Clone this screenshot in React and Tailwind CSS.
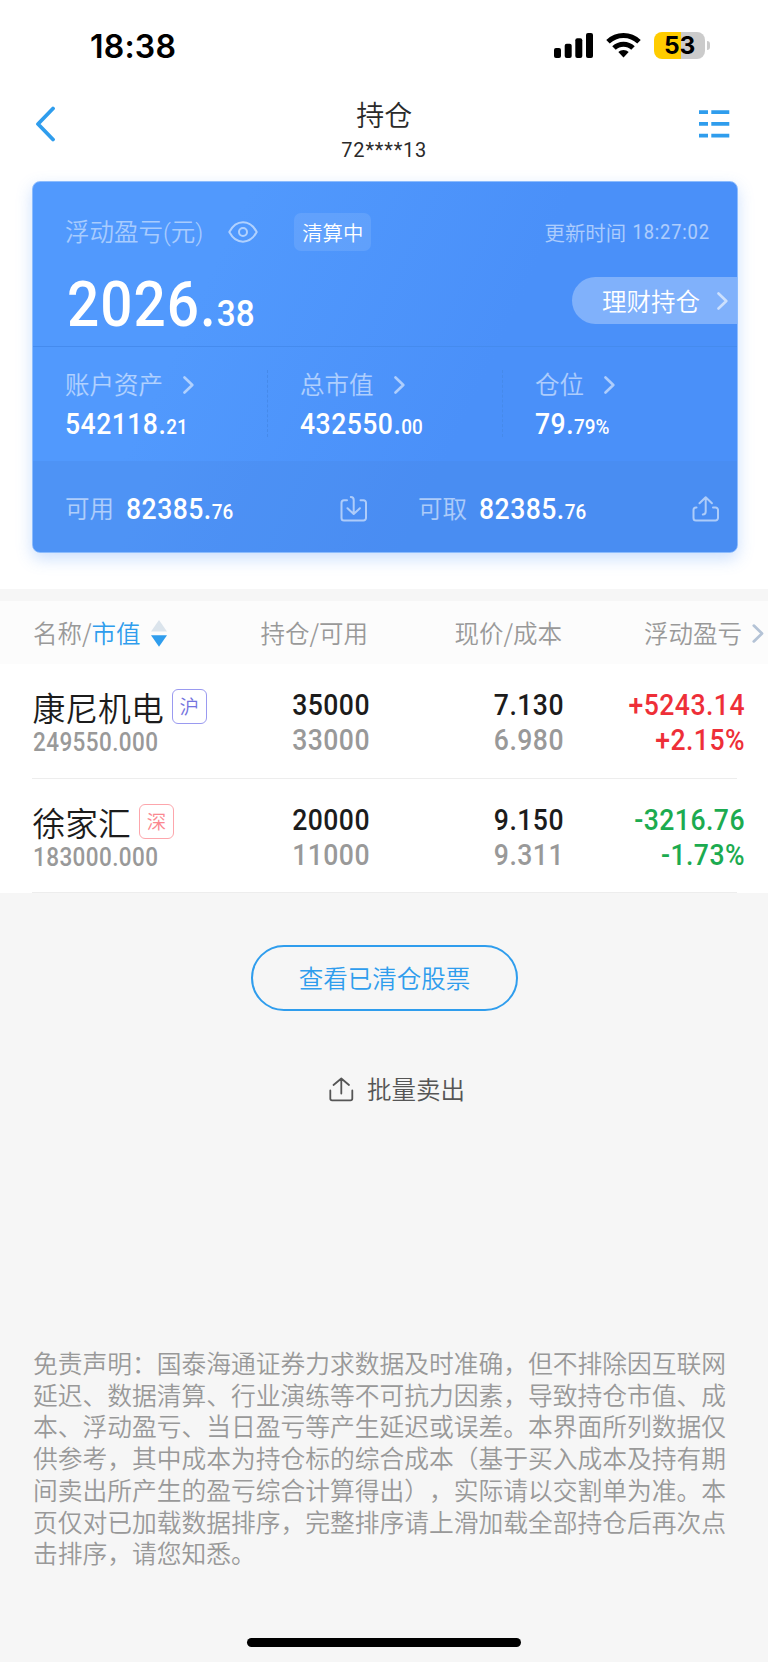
import React from 'react';

const summary = [
    { label: '账户资产', int: '542118.', dec: '21' },
    { label: '总市值', int: '432550.', dec: '00' },
    { label: '仓位', int: '79.', dec: '79%' },
];

const holdings = [
    { name: '康尼机电', market: '沪', value: '249550.000', amount: '35000', available: '33000', price: '7.130', cost: '6.980', profit: '+5243.14', rate: '+2.15%' },
    { name: '徐家汇', market: '深', value: '183000.000', amount: '20000', available: '11000', price: '9.150', cost: '9.311', profit: '-3216.76', rate: '-1.73%' },
];

const disclaimer = [
    '免责声明：国泰海通证券力求数据及时准确，但不排除因互联网',
    '延迟、数据清算、行业演练等不可抗力因素，导致持仓市值、成',
    '本、浮动盈亏、当日盈亏等产生延迟或误差。本界面所列数据仅',
    '供参考，其中成本为持仓标的综合成本（基于买入成本及持有期',
    '间卖出所产生的盈亏综合计算得出），实际请以交割单为准。本',
    '页仅对已加载数据排序，完整排序请上滑加载全部持仓后再次点',
    '击排序，请您知悉。',
];

const Chevron = ({ className }) => (
    <svg className={className} viewBox="0 0 11 18" fill="none" stroke="currentColor" strokeWidth="2.6" strokeLinecap="round" strokeLinejoin="round">
        <path d="M1.5 1.5 9.3 9 1.5 16.5" />
    </svg>
);

// narrow digits, close to DIN
const Num = ({ className = 'origin-left', children }) => (
    <span className={`inline-block font-['Roboto'] font-medium scale-x-90 tracking-[0.018em] ${className}`}>{children}</span>
);

const StatusBar = () => (
    <div className="h-[90px] flex items-start justify-between pl-[90px] pr-[58px] pt-[32px]">
        <div className="font-['Inter'] font-semibold text-[32px] leading-[28px] mt-[1px] tracking-[0.2px] text-black">18:38</div>
        <div className="flex items-start">
            <svg className="w-[39px] h-[27px]" viewBox="0 0 39 27" fill="#000">
                <rect x="0" y="16" width="7" height="10" rx="2" />
                <rect x="10.7" y="11.7" width="7" height="14.3" rx="2" />
                <rect x="21.3" y="6.2" width="7" height="19.8" rx="2" />
                <rect x="32" y="1" width="7" height="25" rx="2" />
            </svg>
            <svg className="w-[35px] h-[26px] ml-[13.5px]" viewBox="0 0 35 26" fill="none" stroke="#000" strokeWidth="5">
                <path d="M2 9.7a22.3 22.3 0 0 1 31 0" />
                <path d="M8 16a13.6 13.6 0 0 1 19 0" />
                <path d="M17.5 25.6 12.3 20a7.6 7.6 0 0 1 10.4 0z" fill="#000" stroke="none" />
            </svg>
            <div className="ml-[13px] w-[51px] h-[27px] rounded-[8px] bg-[linear-gradient(90deg,#ffcc00_53%,#cbcbcb_53%)] flex items-center justify-center font-['Inter'] font-bold text-[24.5px] leading-none tracking-[-0.3px] text-black">53</div>
            <div className="ml-[1.5px] mt-[9px] w-[3.5px] h-[9px] rounded-r-full bg-[#cbcbcb]" />
        </div>
    </div>
);

const Header = () => (
    <div className="h-[91px] flex justify-between items-start pl-[35px] pr-[37.5px]">
        <svg className="w-[20px] h-[36px] mt-[16px]" viewBox="0 0 20 36" fill="none" stroke="#2f9ded" strokeWidth="3.8" strokeLinecap="round" strokeLinejoin="round">
            <path d="M18 2.5 3 18l15 15.5" />
        </svg>
        <div className="flex flex-col items-center pt-[6px] pl-[15px]">
            <div className="text-[28px] leading-[36px] text-[#2a2a2a]">持仓</div>
            <div className="font-['Roboto'] font-normal text-[20px] leading-[24px] mt-[5.5px] tracking-[0.8px] text-[#2a2a2a]">72****13</div>
        </div>
        <svg className="w-[32px] h-[29px] mt-[19px]" viewBox="0 0 32 29" fill="#2f9ded">
            <path d="M1 1.2h9v3.8H1zM13.3 1.2h18v3.8h-18zM1 12.9h9v3.8H1zM13.3 12.9h18v3.8h-18zM1 24.7h9v3.8H1zM13.3 24.7h18v3.8h-18z" />
        </svg>
    </div>
);

const AssetCard = () => (
    <div className="ml-[32px] w-[706px] h-[372px] rounded-[8px] overflow-hidden border border-[#8dbcfd] bg-[linear-gradient(115deg,#5199fd_25%,#4a90f9_62%)] shadow-[0_6px_16px_rgba(74,144,249,0.28)] flex flex-col text-white">
        <div className="h-[165px] shrink-0 border-b border-[#458bee]">
            <div className="flex items-center h-[38px] mt-[31px] pl-[32px] pr-[27px]">
                <div className="text-[24.5px] text-white/50">浮动盈亏<span className="font-['Roboto'] font-light">(</span>元<span className="font-['Roboto'] font-light">)</span></div>
                <svg className="w-[30px] h-[22px] ml-[25px] text-white/55" viewBox="0 0 30 22" fill="none" stroke="currentColor" strokeWidth="2">
                    <path d="M1.3 11C4.5 5 9.2 1.3 15 1.3S25.5 5 28.7 11C25.5 17 20.8 20.7 15 20.7S4.5 17 1.3 11z" strokeLinejoin="round" />
                    <circle cx="15" cy="11" r="4" />
                </svg>
                <div className="ml-[36px] w-[77px] h-[38px] rounded-[7px] bg-white/10 flex items-center justify-center text-[20.4px]">清算中</div>
                <div className="ml-auto flex items-center text-[20.4px] text-white/55">
                    更新时间
                    <Num className="origin-right -ml-[2px] mt-[1px] !font-normal !tracking-[0.9px]">18:27:02</Num>
                </div>
            </div>
            <div className="flex justify-between pl-[33.5px] mt-[26px]">
                <div className="leading-[48px] mt-[4px]">
                    <Num className="origin-left text-[63px]">2026.<span className="text-[37px] tracking-normal">38</span></Num>
                </div>
                <div className="w-[165px] h-[47px] rounded-l-full bg-white/30 flex items-center pt-px pl-[30px] text-[24.5px]">
                    理财持仓
                    <Chevron className="w-[11px] h-[18px] ml-[17px] text-white/60" />
                </div>
            </div>
        </div>
        <div className="h-[114px] shrink-0 flex">
            {summary.map((s, idx) => (
                <div key={s.label} className="w-[235px] shrink-0 flex">
                    <div className="flex-1 pl-[32px] pt-[18.5px]">
                        <div className="flex items-center h-[38px] text-[24.5px] text-white/55">
                            {s.label}
                            <Chevron className="w-[11px] h-[18px] ml-[20px]" />
                        </div>
                        <div className="leading-[36px] mt-[2.5px] whitespace-nowrap">
                            <Num className="origin-left text-[29.5px]">{s.int}<span className="text-[21px] tracking-normal">{s.dec}</span></Num>
                        </div>
                    </div>
                    {idx < 2 && <div className="w-0 h-[67px] mt-[23px] border-l border-dashed border-[#468aea]" />}
                </div>
            ))}
        </div>
        <div className="flex-1 flex bg-[#4684df]/25 pt-[4px]">
            <div className="w-[353px] flex items-center pl-[32px] pr-[19px]">
                <span className="text-[24.5px] text-white/55 mr-[11.5px]">可用</span>
                <Num className="origin-left text-[29.5px] pt-px">82385.<span className="text-[21px] tracking-normal">76</span></Num>
                <svg className="w-[27px] h-[27px] ml-auto text-white/55" viewBox="0 0 27 27" fill="none" stroke="currentColor" strokeWidth="2" strokeLinecap="round" strokeLinejoin="round">
                    <path d="M7 5.2H4A2.5 2.5 0 0 0 1.5 7.7V23A2.5 2.5 0 0 0 4 25.5H23.5A2.5 2.5 0 0 0 26 23V7.7A2.5 2.5 0 0 0 23.5 5.2H20.5" />
                    <path d="M10.8 2C13 2 13.7 3 13.7 5V18.5M7.5 13.3l6.2 5.7 6.2-5.7" />
                </svg>
            </div>
            <div className="flex-1 flex items-center pl-[32px] pr-[18px]">
                <span className="text-[24.5px] text-white/55 mr-[11.5px]">可取</span>
                <Num className="origin-left text-[29.5px] pt-px">82385.<span className="text-[21px] tracking-normal">76</span></Num>
                <svg className="w-[27px] h-[27px] ml-auto text-white/55" viewBox="0 0 27 27" fill="none" stroke="currentColor" strokeWidth="2" strokeLinecap="round" strokeLinejoin="round">
                    <path d="M4.5 12.5H4A2.5 2.5 0 0 0 1.5 15V23A2.5 2.5 0 0 0 4 25.5H23.5A2.5 2.5 0 0 0 26 23V15A2.5 2.5 0 0 0 23.5 12.5H21" />
                    <path d="M10.8 19.5C13 19.5 13.7 18.5 13.7 16.5V2.5M7.5 8.2l6.2-6 6.2 6" />
                </svg>
            </div>
        </div>
    </div>
);

const TableHead = () => (
    <div className="h-[63px] pt-[2px] bg-[#fcfcfc] flex items-center text-[24.5px] text-[#999]">
        <div className="w-[180px] pl-[33px] flex items-center whitespace-nowrap">
            名称/<span className="text-[#2f9ded]">市值</span>
            <svg className="w-[16px] h-[27px] ml-[10px] shrink-0" viewBox="0 0 16 27">
                <path d="M8 0 16 11.5H0z" fill="#dbe4ec" />
                <path d="M0 15.3H16L8 26.8z" fill="#2f9ded" />
            </svg>
        </div>
        <div className="w-[188px] text-right">持仓/可用</div>
        <div className="w-[194px] text-right">现价/成本</div>
        <div className="w-[180px] text-right">浮动盈亏</div>
        <Chevron className="w-[12px] h-[19px] ml-[10px] text-[#b4c3d6]" />
    </div>
);

const HoldingRow = ({ item, last }) => {
    const color = item.profit.startsWith('+') ? 'text-[#ee2f38]' : 'text-[#1cab50]';
    const badge = item.market === '沪' ? 'text-[#7473de] border-[#9a9af0]' : 'text-[#fb8890] border-[#fda6ac]';
    return (
        <div>
            <div className={`${last ? 'h-[113px]' : 'h-[114px]'} flex pt-[24px] text-[29.5px] leading-[34.5px]`}>
                <div className="w-[210px] pl-[32.5px] flex flex-col items-start">
                    <div className="flex items-center gap-[8px] h-[40px] -mt-px whitespace-nowrap">
                        <span className="text-[32.8px] text-[#1c1c1c]">{item.name}</span>
                        <span className={`w-[35px] h-[35px] mb-[2px] shrink-0 border rounded-[6px] flex items-center justify-center text-[19.5px] ${badge}`}>{item.market}</span>
                    </div>
                    <Num className="origin-left text-[25px] leading-[28px] mt-[1.5px] text-[#999]">{item.value}</Num>
                </div>
                <div className="w-[160px] flex flex-col text-right">
                    <Num className="origin-right text-[#1c1c1c]">{item.amount}</Num>
                    <Num className="origin-right text-[#999]">{item.available}</Num>
                </div>
                <div className="w-[194px] flex flex-col text-right">
                    <Num className="origin-right text-[#1c1c1c]">{item.price}</Num>
                    <Num className="origin-right text-[#999]">{item.cost}</Num>
                </div>
                <div className={`w-[181px] flex flex-col text-right ${color}`}>
                    <Num className="origin-right">{item.profit}</Num>
                    <Num className="origin-right">{item.rate}</Num>
                </div>
            </div>
            <div className="h-px ml-[32px] w-[705px] bg-[#ededed]" />
        </div>
    );
};

const App = () => (
    <div className="w-[768px] h-[1662px] bg-[#f6f6f6] flex flex-col overflow-hidden font-['Noto_Sans_CJK_SC',sans-serif] font-[350] [text-spacing-trim:space-all]">
        <div className="bg-white h-[589px] shrink-0">
            <StatusBar />
            <Header />
            <AssetCard />
        </div>
        <div className="mt-[12px]">
            <TableHead />
            <div className="bg-white">
                {holdings.map((h, idx) => (
                    <HoldingRow key={h.name} item={h} last={idx === holdings.length - 1} />
                ))}
            </div>
        </div>
        <button className="mt-[52px] ml-[251px] w-[267px] h-[66px] shrink-0 rounded-full border-2 border-[#2f9ded] text-[24.5px] text-[#2f9ded]">查看已清仓股票</button>
        <div className="mt-[60px] h-[36px] pl-[329px] flex items-center text-[24.5px] text-[#555]">
            <svg className="w-[25px] h-[25px] mr-[13px]" viewBox="0 0 25 25" fill="none" stroke="currentColor" strokeWidth="1.8" strokeLinecap="round" strokeLinejoin="round">
                <path d="M1.3 13.5V21.5A1.8 1.8 0 0 0 3.1 23.3H21.5A1.8 1.8 0 0 0 23.3 21.5V13.5M12.3 16.5V1.8M4.5 8 12.3 1.5 20 8" />
            </svg>
            批量卖出
        </div>
        <p className="mt-[240px] pl-[33px] text-[24.75px] leading-[31.7px] text-[#999] whitespace-pre">{disclaimer.join('\n')}</p>
        <div className="mt-auto mb-[15px] mx-auto w-[274px] h-[9px] rounded-full bg-black shrink-0" />
    </div>
);

export default App;
